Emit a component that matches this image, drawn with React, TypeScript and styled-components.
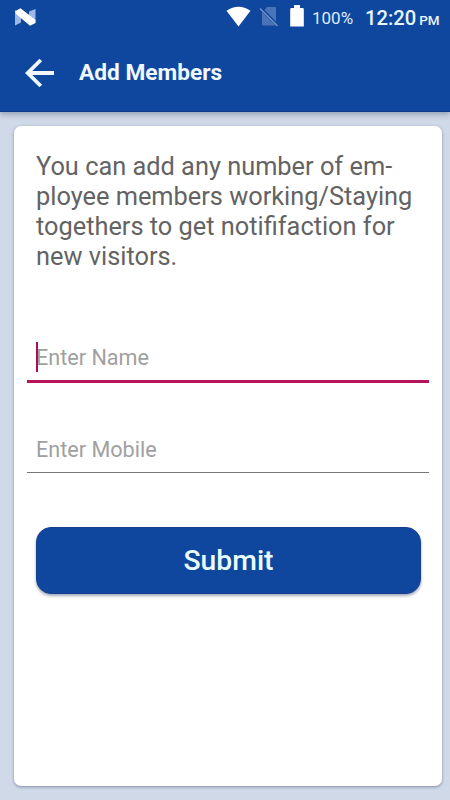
import React from "react";
import styled, { createGlobalStyle } from "styled-components";

const GlobalStyle = createGlobalStyle`
  *, *::before, *::after { box-sizing: border-box; }
  body { margin: 0; background: #cfd9e8; font-family: Roboto, sans-serif; }
`;

const Screen = styled.div`
  width: 450px;
  height: 800px;
  display: flex;
  flex-direction: column;
  overflow: hidden;
  background: #cfd9e8;
`;

const Header = styled.header`
  flex: none;
  height: 112px;
  background: #0f479f;
  color: #fff;
  border-bottom: 1px solid #0c3b8c;
  box-shadow: 0 2px 6px rgba(40, 55, 85, 0.4);
`;

const StatusBar = styled.div`
  height: 34px;
  display: flex;
  align-items: flex-start;
  padding: 0 10px 0 15px;
`;

const StatusIcon = styled.svg<{ $top: number; $left?: number }>`
  flex: none;
  display: block;
  margin-top: ${(p) => p.$top}px;
  margin-left: ${(p) => p.$left ?? 0}px;
`;

const Spacer = styled.div`
  flex: 1;
`;

const Battery = styled.span`
  width: 41px;
  margin: 8px 0 0 8px;
  font-size: 17px;
  line-height: 20px;
  color: #dcecff;
  white-space: nowrap;
`;

const Clock = styled.time`
  width: 75px;
  margin: 6px 0 0 12px;
  font-size: 20.2px;
  font-weight: 500;
  line-height: 24px;
  color: #e8f5ff;
  white-space: nowrap;
`;

const Meridiem = styled.span`
  margin-left: 3px;
  font-size: 13.5px;
`;

const Toolbar = styled.div`
  height: 77px;
  display: flex;
  align-items: center;
  padding: 1px 0 0 24px;
`;

const BackButton = styled.button`
  width: 31px;
  height: 32px;
  padding: 0;
  border: 0;
  background: none;
  svg { display: block; }
`;

const Title = styled.h1`
  margin: 0 0 0 24px;
  font-size: 22.7px;
  font-weight: 700;
  line-height: 28px;
  color: #f0f9ff;
  white-space: nowrap;
`;

const Card = styled.main`
  flex: none;
  width: 428px;
  height: 660px;
  margin: 14px 0 0 14px;
  padding: 25px 13px 0;
  border-radius: 7px;
  background: #fff;
  box-shadow: 0 1px 3px rgba(50, 65, 95, 0.5);
`;

const Intro = styled.p`
  margin: 0 0 0 9px;
  font-size: 25.35px;
  line-height: 30px;
  color: #636363;
  white-space: nowrap;
`;

const Field = styled.label<{ $focused?: boolean; $gap: number }>`
  position: relative;
  display: block;
  width: 402px;
  height: 50px;
  margin-top: ${(p) => p.$gap}px;
  padding-left: 9px;
  border-bottom: ${(p) => (p.$focused ? "3px solid #b3145a" : "1px solid #777")};
`;

const Input = styled.input`
  display: block;
  width: 100%;
  height: 30px;
  padding: 0;
  border: 0;
  outline: 0;
  background: none;
  font: 21.6px/30px Roboto, sans-serif;
  &::placeholder { color: #a0a0a0; opacity: 1; }
`;

const Caret = styled.span`
  position: absolute;
  left: 9px;
  top: 9px;
  width: 2px;
  height: 30px;
  background: #b00c55;
`;

const InputBox = styled.div<{ $top: number }>`
  padding-top: ${(p) => p.$top}px;
`;

const SubmitButton = styled.button`
  display: block;
  width: 385px;
  height: 67px;
  margin: 54px 0 0 9px;
  padding: 1px 0 0;
  border: 1px solid #173e91;
  border-radius: 15px;
  background: #0f479f;
  box-shadow: 0 2px 3px rgba(30, 45, 90, 0.4);
  color: #e8fbff;
  font: 500 28.3px/34px Roboto, sans-serif;
`;

const lines = [
  "You can add any number of em-",
  "ployee members working/Staying",
  "togethers to get notififaction for",
  "new visitors.",
];

export default function App() {
  return (
    <Screen>
      <GlobalStyle />
      <Header>
        <StatusBar>
          <StatusIcon $top={8} width="21" height="18" viewBox="0 0 21 18">
            <path d="M0 2L6 6V14.5L0 17.5ZM14 3.5L20.5 1V14L14 10Z" fill="#9db8e4" />
            <path d="M0.5 3L5.5 0.3L20.5 12V15L15 17.8L0.5 5.5Z" fill="#fff" />
          </StatusIcon>
          <Spacer />
          <StatusIcon $top={6} width="25" height="21" viewBox="0 0 25 21">
            <path d="M0.5 4.8Q12.5-3.5 24.5 4.8L12.5 20.5Z" fill="#fff" />
          </StatusIcon>
          <StatusIcon $top={6} $left={8} width="20" height="22" viewBox="0 0 20 22">
            <path d="M8 1H16Q17 1 17 2V15.5L5.5 4ZM3 6L16.5 19.5H4Q3 19.5 3 18.5Z" fill="#4a73b8" />
            <path d="M1 2.5L18.5 20" stroke="#7893c5" strokeWidth="1.5" />
          </StatusIcon>
          <StatusIcon $top={5} $left={11} width="14" height="22" viewBox="0 0 14 22">
            <path d="M4 0H10V3H12.5Q13.8 3 13.8 4.3V21.5H0.2V4.3Q0.2 3 1.5 3H4Z" fill="#fff" />
          </StatusIcon>
          <Battery>100%</Battery>
          <Clock>12:20<Meridiem>PM</Meridiem></Clock>
        </StatusBar>
        <Toolbar>
          <BackButton aria-label="Back">
            <svg width="31" height="32" viewBox="0 0 31 32" fill="none" stroke="#f0f7ff" strokeWidth="3.8">
              <path d="M16.8 3L3.7 16L16.8 29M4 16H30" />
            </svg>
          </BackButton>
          <Title>Add Members</Title>
        </Toolbar>
      </Header>
      <Card>
        <Intro>
          {lines.map((line) => (
            <React.Fragment key={line}>{line}<br /></React.Fragment>
          ))}
        </Intro>
        <Field $focused $gap={62}>
          <InputBox $top={10}><Input placeholder="Enter Name" /></InputBox>
          <Caret />
        </Field>
        <Field $gap={40}>
          <InputBox $top={12}><Input placeholder="Enter Mobile" /></InputBox>
        </Field>
        <SubmitButton>Submit</SubmitButton>
      </Card>
    </Screen>
  );
}
